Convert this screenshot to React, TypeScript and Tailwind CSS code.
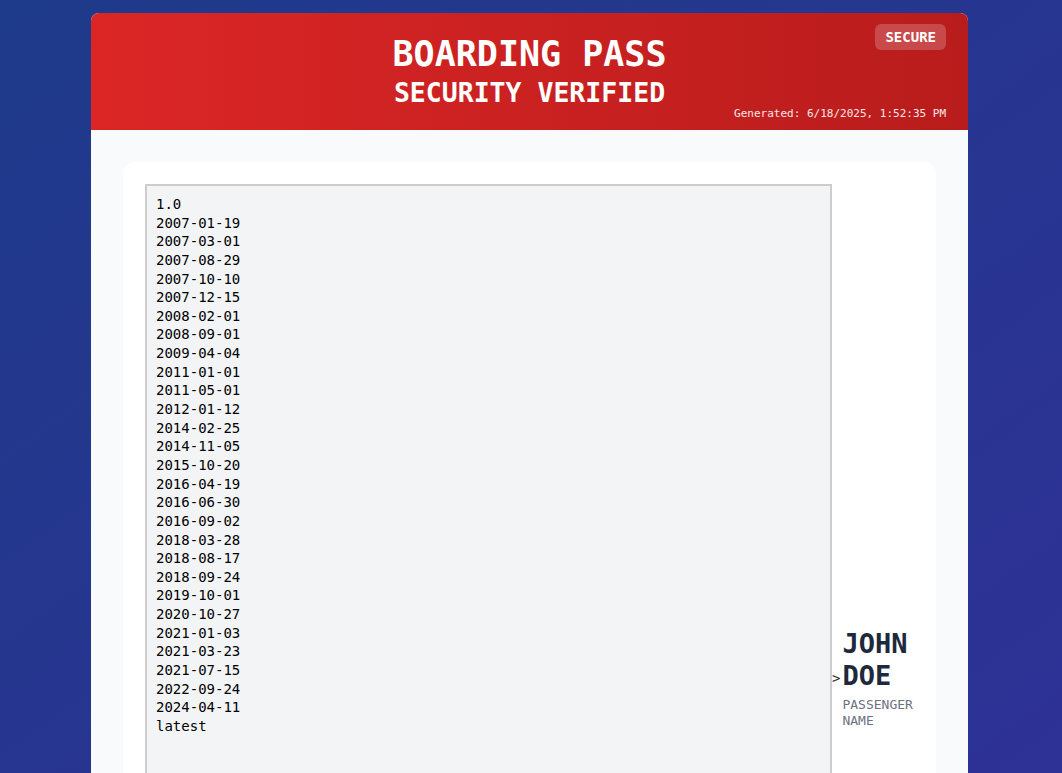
const versions = [
  "1.0",
  "2007-01-19",
  "2007-03-01",
  "2007-08-29",
  "2007-10-10",
  "2007-12-15",
  "2008-02-01",
  "2008-09-01",
  "2009-04-04",
  "2011-01-01",
  "2011-05-01",
  "2012-01-12",
  "2014-02-25",
  "2014-11-05",
  "2015-10-20",
  "2016-04-19",
  "2016-06-30",
  "2016-09-02",
  "2018-03-28",
  "2018-08-17",
  "2018-09-24",
  "2019-10-01",
  "2020-10-27",
  "2021-01-03",
  "2021-03-23",
  "2021-07-15",
  "2022-09-24",
  "2024-04-11",
  "latest",
];

const mono = "font-['DejaVu_Sans_Mono',monospace]";

export default function App() {
  return (
    <div
      className={`min-h-[773px] w-full bg-gradient-to-br from-[#1e3a8a] to-[#2e3196] pt-[13px] ${mono}`}
    >
      <div className="ml-[91px] w-[877px] h-[760px] overflow-hidden rounded-t-lg bg-[#f8fafc]">
        <header className="relative h-[117px] bg-gradient-to-r from-[#dc2626] to-[#b91c1c] text-white">
          <div className="flex flex-col items-center pt-[22px]">
            <h1 className="text-[35px] font-bold leading-[38px]">
              BOARDING PASS
            </h1>
            <h2 className="text-[26.5px] font-bold leading-[39px]">
              SECURITY VERIFIED
            </h2>
          </div>
          <span className="absolute right-[22px] top-[11px] rounded-md bg-white/20 px-[10px] py-[4px] text-[14px] font-bold leading-[18px]">
            SECURE
          </span>
          <span className="absolute bottom-[9px] right-[22px] text-[11px] leading-[14px] text-white/90">
            Generated: 6/18/2025, 1:52:35 PM
          </span>
        </header>

        <div className="p-8">
          <div className="rounded-xl bg-white p-[22px]">
            <div className="flex items-center">
              <div className="h-[988px] w-[687px] shrink-0 border-2 border-[#cdcdcd] bg-[#f3f4f6] px-[9px] pt-[9px] pb-[8px] text-[14px] leading-[18.64px] text-black">
                {versions.map((v) => (
                  <div key={v}>{v}</div>
                ))}
              </div>
              <span className="text-[14px] text-[#1f2937]">&gt;</span>
              <div className="ml-[2px] w-[75px]">
                <div className="text-[27px] font-bold leading-[32px] text-[#1e293b]">
                  JOHN DOE
                </div>
                <div className="mt-[5px] text-[13px] leading-4 text-[#6b7280]">
                  PASSENGER NAME
                </div>
              </div>
            </div>
          </div>
        </div>
      </div>
    </div>
  );
}
